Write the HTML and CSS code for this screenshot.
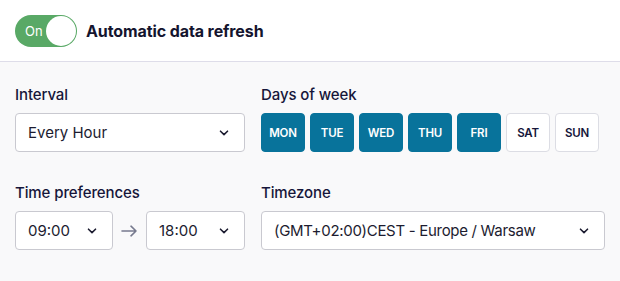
FILE: index.html
```html
<!DOCTYPE html>
<html lang="en">
<head>
    <meta charset="UTF-8">
    <meta name="viewport" content="width=device-width, initial-scale=1.0">
    <title>Automatic data refresh</title>
    <link rel="stylesheet" href="styles.css">
</head>
<body>
<div class="panel">
    <div class="panel-header">
        <div class="toggle on">
            <span class="toggle-text">On</span>
            <span class="toggle-knob"></span>
        </div>
        <h2 class="title">Automatic data refresh</h2>
    </div>
    <div class="panel-body">
        <div class="field">
            <div class="label">Interval</div>
            <div class="select">
                <span>Every Hour</span>
                <svg class="chevron" width="10" height="6" viewBox="0 0 10 6"><path d="M1.5 1.2 5 4.6 8.5 1.2" fill="none" stroke="#1c1c30" stroke-width="1.6" stroke-linecap="round" stroke-linejoin="round"/></svg>
            </div>
        </div>
        <div class="field">
            <div class="label">Days of week</div>
            <div class="days">
                <button class="day active">MON</button>
                <button class="day active">TUE</button>
                <button class="day active">WED</button>
                <button class="day active">THU</button>
                <button class="day active">FRI</button>
                <button class="day">SAT</button>
                <button class="day">SUN</button>
            </div>
        </div>
        <div class="field">
            <div class="label">Time preferences</div>
            <div class="time-range">
                <div class="select">
                    <span>09:00</span>
                    <svg class="chevron" width="10" height="6" viewBox="0 0 10 6"><path d="M1.5 1.2 5 4.6 8.5 1.2" fill="none" stroke="#1c1c30" stroke-width="1.6" stroke-linecap="round" stroke-linejoin="round"/></svg>
                </div>
                <svg class="arrow" width="17" height="12" viewBox="0 0 17 12"><path d="M1 6h14M10 1.2 15 6l-5 4.8" fill="none" stroke="#777a8e" stroke-width="1.6" stroke-linecap="round" stroke-linejoin="round"/></svg>
                <div class="select">
                    <span>18:00</span>
                    <svg class="chevron" width="10" height="6" viewBox="0 0 10 6"><path d="M1.5 1.2 5 4.6 8.5 1.2" fill="none" stroke="#1c1c30" stroke-width="1.6" stroke-linecap="round" stroke-linejoin="round"/></svg>
                </div>
            </div>
        </div>
        <div class="field">
            <div class="label">Timezone</div>
            <div class="select timezone">
                <span>(GMT+02:00)CEST - Europe / Warsaw</span>
                <svg class="chevron" width="10" height="6" viewBox="0 0 10 6"><path d="M1.5 1.2 5 4.6 8.5 1.2" fill="none" stroke="#1c1c30" stroke-width="1.6" stroke-linecap="round" stroke-linejoin="round"/></svg>
            </div>
        </div>
    </div>
</div>
</body>
</html>
```

FILE: styles.css
```css
body {
    margin: 0;
    font-family: Inter, "Noto Sans", sans-serif;
    color: #16163a;
    background-color: #f9f9fa;
}
.panel {
    width: 620px;
    height: 281px;
    background-color: #f9f9fa;
}
.panel-header {
    display: flex;
    align-items: center;
    gap: 9px;
    height: 62px;
    padding: 0 15px;
    box-sizing: border-box;
    background: #ffffff;
    border-bottom: 1px solid #dedde9;
}
.toggle {
    display: flex;
    align-items: center;
    justify-content: space-between;
    width: 62px;
    height: 32px;
    padding: 1px;
    box-sizing: border-box;
    border-radius: 16px;
    background: #59a966;
}
.toggle-text {
    color: #ffffff;
    font-size: 13px;
    padding-left: 9px;
}
.toggle-knob {
    width: 30px;
    height: 30px;
    border-radius: 50%;
    background: #ffffff;
}
.title {
    margin: 0;
    font-size: 16px;
    font-weight: 700;
    letter-spacing: -0.1px;
    color: #14142e;
}
.panel-body {
    display: grid;
    grid-template-columns: 230px 344px;
    column-gap: 16px;
    row-gap: 31px;
    padding: 23px 15px 0;
}
.label {
    font-size: 15px;
    font-weight: 500;
    line-height: 20px;
    margin-bottom: 8px;
    letter-spacing: -0.1px;
}
.select {
    display: flex;
    align-items: center;
    justify-content: space-between;
    height: 39px;
    padding: 0 15px 0 12px;
    box-sizing: border-box;
    background: #ffffff;
    border: 1px solid #c9c9d0;
    border-radius: 4px;
    font-size: 15px;
    color: #1c1c30;
}
.timezone span {
    letter-spacing: -0.3px;
}
.days {
    display: flex;
    gap: 5px;
}
.day {
    width: 44px;
    height: 39px;
    padding: 0;
    border: 1px solid #dcdde4;
    border-radius: 4px;
    background: #ffffff;
    color: #16163a;
    font-family: inherit;
    font-size: 11.5px;
    font-weight: 600;
    letter-spacing: -0.2px;
}
.day.active {
    background: #08739b;
    border-color: #08739b;
    color: #ffffff;
}
.time-range {
    display: flex;
    align-items: center;
}
.time-range .select {
    width: 98px;
}
.time-range .select:last-child {
    width: 99px;
}
.arrow {
    margin: 0 8px;
}
```
